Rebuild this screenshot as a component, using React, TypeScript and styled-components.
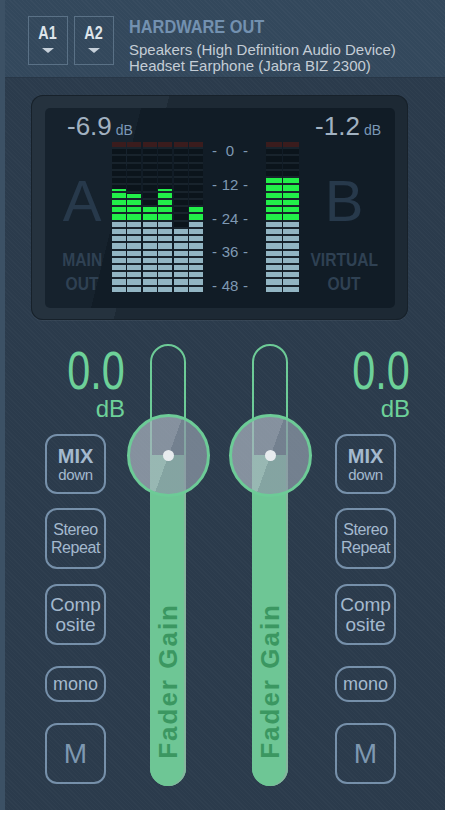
import styled, { createGlobalStyle } from 'styled-components';

const SANS = `'Liberation Sans', Arial, sans-serif`;

const GlobalStyle = createGlobalStyle`
  html, body {
    margin: 0;
    padding: 0;
    background: #ffffff;
  }
  body {
    font-family: ${SANS};
  }
`;

const Panel = styled.div`
  width: 440px;
  height: 810px;
  border-left: 5px solid #3c5165;
  background-color: #2b3b4c;
  background-image: repeating-linear-gradient(
    45deg,
    rgba(255, 255, 255, 0.018) 0 1px,
    transparent 1px 3px
  );
  display: flex;
  flex-direction: column;
`;

/* ---------- header ---------- */

const Header = styled.header`
  height: 78px;
  box-sizing: border-box;
  padding: 16px 0 0 23px;
  display: flex;
  align-items: flex-start;
  gap: 6px;
  background-color: #33485c;
  background-image: repeating-linear-gradient(
    45deg,
    rgba(255, 255, 255, 0.025) 0 1px,
    transparent 1px 3px
  );
  border-bottom: 1px solid #283747;
`;

const OutButton = styled.div`
  width: 40px;
  height: 49px;
  box-sizing: border-box;
  border: 1px solid #5a7186;
  padding-top: 7px;
  display: flex;
  flex-direction: column;
  align-items: center;
`;

// no narrow face installed, so squeeze the bold face horizontally
const OutName = styled.span`
  display: inline-block;
  font-weight: bold;
  font-size: 18px;
  line-height: 18px;
  color: #dde4ea;
  transform: scaleX(0.8);
`;

const DropArrow = styled.div`
  margin-top: 6px;
  width: 0;
  height: 0;
  border-left: 6px solid transparent;
  border-right: 6px solid transparent;
  border-top: 5px solid #c6d0da;
`;

const DeviceInfo = styled.div`
  margin-left: 9px;
  padding-top: 1px;
  display: flex;
  flex-direction: column;
`;

const DeviceTitle = styled.div`
  font-weight: bold;
  font-size: 19px;
  line-height: 20px;
  color: #7391b0;
  margin-bottom: 5px;
  white-space: nowrap;
  transform: scaleX(0.86);
  transform-origin: left center;
`;

const DeviceLine = styled.div`
  font-size: 15px;
  line-height: 16px;
  color: #c4cdd6;
  white-space: nowrap;
`;

/* ---------- meter display ---------- */

const Body = styled.div`
  flex: 1;
  display: flex;
  flex-direction: column;
`;

const MeterFrame = styled.div`
  margin: 17px 0 0 26px;
  width: 377px;
  height: 225px;
  box-sizing: border-box;
  padding: 13px 13px 12px 14px;
  border-radius: 12px;
  background: linear-gradient(104deg, #25323e 0 32%, #1d2934 32%);
  box-shadow: inset 0 0 0 1px #17212a, 0 1px 0 rgba(255, 255, 255, 0.05);
  display: flex;
`;

const Screen = styled.div`
  flex: 1;
  border-radius: 5px;
  background: linear-gradient(104deg, #16222d 0 24%, #111c26 24%);
  display: flex;
  flex-direction: column;
  padding-top: 6px;
`;

const ReadoutRow = styled.div`
  height: 28px;
  display: flex;
  justify-content: space-between;
  align-items: flex-start;
  padding: 0 14px 0 22px;
`;

const Level = styled.div`
  font-size: 26px;
  line-height: 25px;
  color: #a2b2c1;
`;

const LevelUnit = styled.span`
  font-size: 14px;
  margin-left: 4px;
  color: #7b98b6;
`;

const MeterRow = styled.div`
  height: 153px;
  display: flex;
  align-items: flex-start;
`;

const BusLabel = styled.div<{ $w: number; $pl: number; $pr: number }>`
  width: ${(p) => p.$w}px;
  box-sizing: border-box;
  padding: 30px ${(p) => p.$pr}px 0 ${(p) => p.$pl}px;
  display: flex;
  flex-direction: column;
  align-items: center;
`;

const BusLetter = styled.div`
  font-size: 58px;
  line-height: 58px;
  color: #27394b;
  margin-bottom: 18px;
`;

const BusName = styled.div`
  font-weight: bold;
  font-size: 19px;
  line-height: 24px;
  color: #2f4153;
  white-space: nowrap;
  transform: scaleX(0.82);
`;

const Meter = styled.div<{ $w: number }>`
  width: ${(p) => p.$w}px;
  height: 150px;
  display: flex;
  gap: 1.5px;
`;

const MeterColumn = styled.div`
  flex: 1;
  display: flex;
  flex-direction: column;
  gap: 2px;
  background: #18232c;
`;

const SEG_COLORS = {
  off: '#0b141b',
  peak: '#3a1c1d',
  low: '#92b5c3',
  high: '#22ef49',
};

type Tone = keyof typeof SEG_COLORS;

const Segment = styled.div<{ $tone: Tone; $fill: number }>`
  flex: 1;
  background: ${(p) =>
    p.$fill >= 100
      ? SEG_COLORS[p.$tone]
      : p.$fill <= 0
      ? SEG_COLORS.off
      : `linear-gradient(to top, ${SEG_COLORS[p.$tone]} ${p.$fill}%, ${SEG_COLORS.off} ${p.$fill}%)`};
`;

const Scale = styled.div`
  width: 63px;
  height: 153px;
  box-sizing: border-box;
  padding-right: 9px;
  display: flex;
  flex-direction: column;
  justify-content: space-between;
  align-items: center;
`;

const ScaleMark = styled.div`
  width: 36px;
  display: flex;
  justify-content: space-between;
  font-size: 15px;
  line-height: 18px;
  color: #7f99b3;
`;

/* ---------- mixer ---------- */

const MixerRow = styled.div`
  margin-top: 24px;
  height: 442px;
  padding-left: 40px;
  display: flex;
  align-items: flex-start;
`;

const Strip = styled.div<{ $w: number; $ml?: number }>`
  width: ${(p) => p.$w}px;
  margin-left: ${(p) => p.$ml ?? 0}px;
  display: flex;
  flex-direction: column;
`;

const Gain = styled.div`
  align-self: flex-end;
  margin-top: 5px;
  display: flex;
  flex-direction: column;
  align-items: flex-end;
  color: #6dd199;
`;

const GainValue = styled.div`
  font-size: 53px;
  line-height: 44px;
  transform: scaleX(0.78);
  transform-origin: right center;
`;

const GainUnit = styled.div`
  font-size: 24px;
  line-height: 20px;
  margin-top: 6px;
`;

const StripButton = styled.div<{ $h: number; $mt: number; $r?: number }>`
  width: 61px;
  height: ${(p) => p.$h}px;
  margin-top: ${(p) => p.$mt}px;
  box-sizing: border-box;
  border: 2px solid #7690aa;
  border-radius: ${(p) => p.$r ?? 12}px;
  display: flex;
  flex-direction: column;
  align-items: center;
  justify-content: center;
  color: #a4b9ce;
  text-align: center;
`;

const BtnText = styled.div<{ $size: number; $lh: number; $bold?: boolean; $dim?: boolean }>`
  font-size: ${(p) => p.$size}px;
  line-height: ${(p) => p.$lh}px;
  font-weight: ${(p) => (p.$bold ? 'bold' : 'normal')};
  color: ${(p) => (p.$dim ? '#7e98b1' : 'inherit')};
  letter-spacing: ${(p) => (p.$size < 17 && !p.$bold ? '-0.4px' : '0')};
`;

const FaderTrack = styled.div<{ $ml: number }>`
  position: relative;
  margin-left: ${(p) => p.$ml}px;
  width: 36px;
  height: 442px;
  box-sizing: border-box;
  border: 2px solid #6dcb97;
  border-radius: 18px;
  display: flex;
  flex-direction: column;
`;

const FaderSpace = styled.div`
  flex: 0 0 109px;
`;

const FaderFill = styled.div`
  flex: 1;
  margin: 0 -2px -2px;
  border-radius: 0 0 18px 18px;
  background: #6ec695;
  box-shadow: inset -2px 0 0 rgba(150, 170, 165, 0.6);
  display: flex;
  flex-direction: column;
  justify-content: flex-end;
  align-items: center;
  padding-bottom: 27px;
`;

const FaderLabel = styled.div`
  writing-mode: vertical-rl;
  transform: rotate(180deg);
  font-weight: bold;
  font-size: 26px;
  line-height: 26px;
  letter-spacing: 2px;
  color: #3b9761;
  white-space: nowrap;
`;

const Knob = styled.div`
  position: absolute;
  left: calc(50% - 41.5px);
  top: 67.5px;
  width: 83px;
  height: 83px;
  box-sizing: border-box;
  border: 3px solid #6dcb97;
  border-radius: 50%;
  background: linear-gradient(
    110deg,
    rgba(168, 178, 190, 0.72) 50%,
    rgba(140, 152, 166, 0.74) 50%
  );
  display: flex;
  align-items: center;
  justify-content: center;
`;

const KnobDot = styled.div`
  width: 11px;
  height: 11px;
  border-radius: 50%;
  background: #e7ebee;
`;

/* ---------- data ---------- */

const SEGMENTS = 21;
const mainLevels = [14.4, 13.8, 12, 14.4, 9, 12];
const virtualLevels = [16, 16];
const scaleMarks = ['0', '12', '24', '36', '48'];

function LevelColumn({ level }: { level: number }) {
  const rows = [];
  for (let i = SEGMENTS; i >= 1; i--) {
    const tone: Tone = i === SEGMENTS ? 'peak' : i <= 10 ? 'low' : 'high';
    let fill = 0;
    if (i <= Math.floor(level)) fill = 100;
    else if (i === Math.floor(level) + 1) fill = Math.round((level - Math.floor(level)) * 100);
    if (tone === 'peak') fill = 100;
    rows.push(<Segment key={i} $tone={tone} $fill={fill} />);
  }
  return <MeterColumn>{rows}</MeterColumn>;
}

function Fader({ ml }: { ml: number }) {
  return (
    <FaderTrack $ml={ml}>
      <FaderSpace />
      <FaderFill>
        <FaderLabel>Fader Gain</FaderLabel>
      </FaderFill>
      <Knob>
        <KnobDot />
      </Knob>
    </FaderTrack>
  );
}

function StripButtons() {
  return (
    <>
      <StripButton $h={60} $mt={15}>
        <BtnText $size={20} $lh={20} $bold>
          MIX
        </BtnText>
        <BtnText $size={15} $lh={17}>
          down
        </BtnText>
      </StripButton>
      <StripButton $h={61} $mt={14}>
        <BtnText $size={16} $lh={18}>
          Stereo
        </BtnText>
        <BtnText $size={16} $lh={18}>
          Repeat
        </BtnText>
      </StripButton>
      <StripButton $h={61} $mt={15}>
        <BtnText $size={19} $lh={20}>
          Comp
        </BtnText>
        <BtnText $size={19} $lh={20}>
          osite
        </BtnText>
      </StripButton>
      <StripButton $h={36} $mt={21} $r={14}>
        <BtnText $size={18} $lh={20}>
          mono
        </BtnText>
      </StripButton>
      <StripButton $h={61} $mt={21}>
        <BtnText $size={28} $lh={28} $dim>
          M
        </BtnText>
      </StripButton>
    </>
  );
}

export default function App() {
  return (
    <>
      <GlobalStyle />
      <Panel>
        <Header>
          <OutButton>
            <OutName>A1</OutName>
            <DropArrow />
          </OutButton>
          <OutButton>
            <OutName>A2</OutName>
            <DropArrow />
          </OutButton>
          <DeviceInfo>
            <DeviceTitle>HARDWARE OUT</DeviceTitle>
            <DeviceLine>Speakers (High Definition Audio Device)</DeviceLine>
            <DeviceLine>Headset Earphone (Jabra BIZ 2300)</DeviceLine>
          </DeviceInfo>
        </Header>

        <Body>
          <MeterFrame>
            <Screen>
              <ReadoutRow>
                <Level>
                  -6.9<LevelUnit>dB</LevelUnit>
                </Level>
                <Level>
                  -1.2<LevelUnit>dB</LevelUnit>
                </Level>
              </ReadoutRow>
              <MeterRow>
                <BusLabel $w={67} $pl={7} $pr={0}>
                  <BusLetter>A</BusLetter>
                  <BusName>MAIN</BusName>
                  <BusName>OUT</BusName>
                </BusLabel>
                <Meter $w={91}>
                  {mainLevels.map((l, i) => (
                    <LevelColumn key={i} level={l} />
                  ))}
                </Meter>
                <Scale>
                  {scaleMarks.map((m) => (
                    <ScaleMark key={m}>
                      <span>-</span>
                      <span>{m}</span>
                      <span>-</span>
                    </ScaleMark>
                  ))}
                </Scale>
                <Meter $w={33}>
                  {virtualLevels.map((l, i) => (
                    <LevelColumn key={i} level={l} />
                  ))}
                </Meter>
                <BusLabel $w={96} $pl={0} $pr={6}>
                  <BusLetter>B</BusLetter>
                  <BusName>VIRTUAL</BusName>
                  <BusName>OUT</BusName>
                </BusLabel>
              </MeterRow>
            </Screen>
          </MeterFrame>

          <MixerRow>
            <Strip $w={80}>
              <Gain>
                <GainValue>0.0</GainValue>
                <GainUnit>dB</GainUnit>
              </Gain>
              <StripButtons />
            </Strip>
            <Fader ml={25} />
            <Fader ml={66} />
            <Strip $w={75} $ml={47}>
              <Gain>
                <GainValue>0.0</GainValue>
                <GainUnit>dB</GainUnit>
              </Gain>
              <StripButtons />
            </Strip>
          </MixerRow>
        </Body>
      </Panel>
    </>
  );
}
